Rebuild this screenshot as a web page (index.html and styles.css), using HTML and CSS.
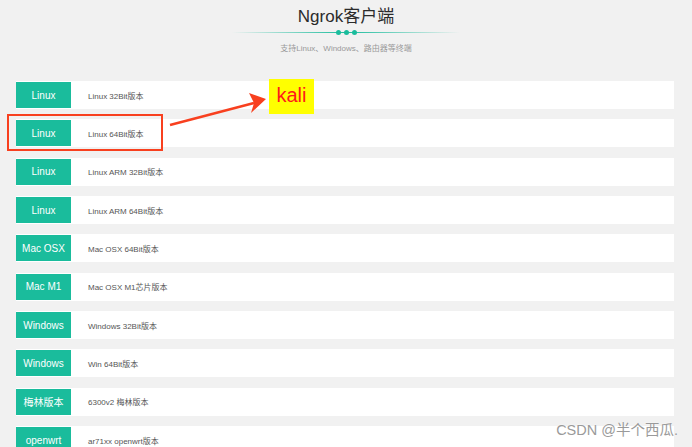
FILE: index.html
```html
<!DOCTYPE html>
<html lang="zh-CN">
<head>
    <meta charset="UTF-8">
    <meta name="viewport" content="width=device-width, initial-scale=1.0">
    <title>Ngrok客户端</title>
    <link rel="stylesheet" href="styles.css">
</head>
<body>
    <div class="page">
        <div class="header">
            <h1>Ngrok客户端</h1>
            <div class="divider">
                <span class="dot"></span><span class="dot"></span><span class="dot"></span>
            </div>
            <p class="subtitle">支持Linux、Windows、路由器等终端</p>
        </div>

        <div class="list">
            <div class="item"><span class="tag">Linux</span><span class="desc">Linux 32Bit版本</span></div>
            <div class="item"><span class="tag">Linux</span><span class="desc">Linux 64Bit版本</span></div>
            <div class="item"><span class="tag">Linux</span><span class="desc">Linux ARM 32Bit版本</span></div>
            <div class="item"><span class="tag">Linux</span><span class="desc">Linux ARM 64Bit版本</span></div>
            <div class="item"><span class="tag">Mac OSX</span><span class="desc">Mac OSX 64Bit版本</span></div>
            <div class="item"><span class="tag">Mac M1</span><span class="desc">Mac OSX M1芯片版本</span></div>
            <div class="item"><span class="tag">Windows</span><span class="desc">Windows 32Bit版本</span></div>
            <div class="item"><span class="tag">Windows</span><span class="desc">Win 64Bit版本</span></div>
            <div class="item"><span class="tag">梅林版本</span><span class="desc">6300v2 梅林版本</span></div>
            <div class="item"><span class="tag">openwrt</span><span class="desc">ar71xx openwrt版本</span></div>
        </div>

        <!-- annotation drawn over the screenshot -->
        <div class="mark-box"></div>
        <svg class="mark-arrow" width="110" height="40" viewBox="0 0 110 40">
            <path d="M2 36 L86 14" stroke="#f8401f" stroke-width="2.4" fill="none"/>
            <path d="M98 10 L81 4 L86 14 L83 24 Z" fill="#f8401f"/>
        </svg>
        <div class="kali">kali</div>

        <div class="watermark">CSDN @半个西瓜.</div>
    </div>
</body>
</html>
```

FILE: styles.css
```css
body {
    margin: 0;
    padding: 0;
    background-color: #f1f1f1;
    font-family: "Liberation Sans", Arial, "Noto Sans CJK SC", sans-serif;
    color: #333;
}

.page {
    position: relative;
    width: 692px;
    height: 447px;
    overflow: hidden;
}

.header {
    text-align: center;
    padding-top: 5px;
    height: 76px;
}

.header h1 {
    margin: 0;
    font-size: 17px;
    font-weight: normal;
    color: #2b2b2b;
    line-height: 24px;
}

.divider {
    position: relative;
    width: 228px;
    height: 1px;
    margin: 3px auto 0;
    background: linear-gradient(to right, rgba(26, 188, 156, 0), #1abc9c 50%, rgba(26, 188, 156, 0));
    display: flex;
    justify-content: center;
    align-items: center;
    gap: 3px;
}

.dot {
    width: 5px;
    height: 5px;
    border-radius: 50%;
    background-color: #1abc9c;
}

.subtitle {
    margin: 9px 0 0;
    font-size: 8px;
    color: #999;
}

.list {
    padding: 0 18px 0 16px;
}

.item {
    display: flex;
    align-items: center;
    height: 28px;
    margin-bottom: 10.35px;
    background-color: #fff;
}

.tag {
    width: 55px;
    height: 26px;
    display: flex;
    justify-content: center;
    align-items: center;
    background-color: #1abc9c;
    color: #fff;
    font-size: 10px;
}

.desc {
    margin-left: 17px;
    font-size: 8px;
    color: #555;
}

.mark-box {
    position: absolute;
    left: 7px;
    top: 114px;
    width: 152px;
    height: 33px;
    border: 2px solid #f8401f;
}

.mark-arrow {
    position: absolute;
    left: 168px;
    top: 89px;
}

.kali {
    position: absolute;
    left: 269px;
    top: 79px;
    width: 45px;
    height: 35px;
    background-color: #ffff00;
    color: #ff1a1a;
    font-size: 20px;
    line-height: 33px;
    text-align: center;
}

.watermark {
    position: absolute;
    right: 14px;
    top: 418px;
    font-size: 14.5px;
    color: #9a9a9a;
    text-shadow: 0 0 2px #fff;
}
```
